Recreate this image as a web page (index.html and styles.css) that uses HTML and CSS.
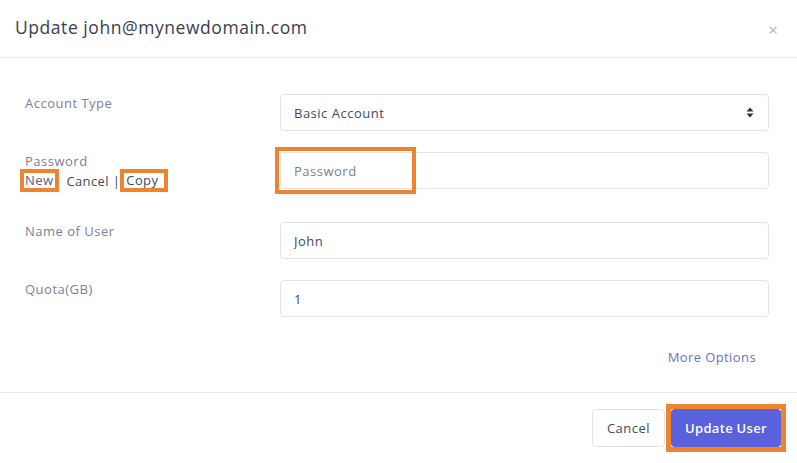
FILE: index.html
```html
<!DOCTYPE html>
<html lang="en">
<head>
<meta charset="utf-8">
<title>Update user</title>
<link rel="stylesheet" href="styles.css">
</head>
<body>
<div class="modal">
  <div class="modal-header">
    <h1 class="modal-title">Update john@mynewdomain.com</h1>
    <span class="close">×</span>
  </div>
  <div class="modal-body">
    <div class="row">
      <div class="label-col"><span class="label">Account Type</span></div>
      <div class="field-col">
        <div class="select">
          <span>Basic Account</span>
          <svg class="caret" width="8" height="11" viewBox="0 0 8 11"><path d="M4 0.5 L7.5 4.5 H0.5 Z M4 10.5 L7.5 6.5 H0.5 Z" fill="#333"/></svg>
        </div>
      </div>
    </div>
    <div class="row row-password">
      <div class="label-col">
        <span class="label">Password</span>
        <div class="pw-links">
          <span class="mark mark-new">New</span>
          <span class="cancel-link">Cancel |</span>
          <span class="mark mark-copy">Copy</span>
        </div>
      </div>
      <div class="field-col field-annotated">
        <input class="input" type="text" placeholder="Password">
        <span class="annot-box"></span>
      </div>
    </div>
    <div class="row">
      <div class="label-col"><span class="label">Name of User</span></div>
      <div class="field-col"><input class="input filled" type="text" value="John"></div>
    </div>
    <div class="row">
      <div class="label-col"><span class="label">Quota(GB)</span></div>
      <div class="field-col"><input class="input filled" type="text" value="1"></div>
    </div>
    <div class="more"><a class="more-link">More Options</a></div>
  </div>
  <div class="modal-footer">
    <button class="btn btn-cancel">Cancel</button>
    <div class="btn-annot"><button class="btn btn-primary">Update User</button></div>
  </div>
</div>
</body>
</html>
```
FILE: styles.css
```css
* { box-sizing: border-box; }
html, body { margin: 0; padding: 0; background: #fff; }
body {
  font-family: "Open Sans", "Liberation Sans", sans-serif;
  color: #444a5a;
  width: 797px;
  height: 463px;
  overflow: hidden;
}
.modal { width: 797px; height: 463px; display: flex; flex-direction: column; }
.modal-header {
  height: 58px;
  border-bottom: 1px solid #e9e9ee;
  display: flex;
  align-items: center;
  justify-content: space-between;
  padding: 0 19px 0 15px;
}
.modal-title {
  margin: 0;
  font-size: 17.5px;
  font-weight: 500;
  color: #3a3d4d;
  letter-spacing: 0.55px;
  padding-bottom: 3px;
}
.close { color: #b5b5bd; font-size: 17px; line-height: 1; padding-top: 2px; }
.modal-body {
  padding: 36px 28px 0 25px;
  flex: 1;
  border-bottom: 1px solid #e9e9ee;
}
.row { display: flex; margin-bottom: 21px; }
.row-password { margin-bottom: 30px; }
.label-col { width: 255px; display: flex; flex-direction: column; }
.label { font-size: 13px; line-height: 18px; color: #7b8099; letter-spacing: 0.5px; }
.field-col { flex: 1; }
.select, .input {
  width: 100%;
  height: 37px;
  border: 1px solid #e2e3e8;
  border-radius: 4px;
  background: #fff;
  font-family: inherit;
  font-size: 13px;
  color: #444a5a;
  padding: 0 13px;
  letter-spacing: 0.5px;
}
.select { display: flex; align-items: center; justify-content: space-between; padding-right: 14px; }
.input { display: block; outline: none; }
.input::placeholder { color: #7b8099; }
.field-annotated { position: relative; }
.annot-box {
  position: absolute;
  left: -5px;
  top: -5px;
  width: 141px;
  height: 47px;
  border: 4px solid #f08330;
  pointer-events: none;
}
.pw-links { display: flex; align-items: center; margin-top: -1px; margin-left: -5px; font-size: 13px; color: #444a5a; letter-spacing: 0.4px; }
.mark { border: 4px solid #f08330; line-height: 15px; height: 23px; }
.mark-new { padding: 0 2px 0 1px; color: #5a607a; }
.cancel-link { margin-left: 7px; margin-right: 0; }
.mark-copy { padding: 0 6px 0 2px; }
.more { text-align: right; padding: 7px 13px 0 0; }
.more-link { font-size: 13px; line-height: 18px; color: #6a71c6; letter-spacing: 0.4px; }
.modal-footer {
  height: 70px;
  display: flex;
  align-items: center;
  justify-content: flex-end;
  padding: 0 11px 0 0;
  gap: 1px;
}
.btn {
  font-family: inherit;
  font-size: 13px;
  height: 38px;
  border-radius: 4px;
  cursor: pointer;
  letter-spacing: 0.5px;
}
.btn-cancel { background: #fff; border: 1px solid #e2e3e8; color: #444a5a; width: 73px; padding: 0; }
.btn-annot { border: 5px solid #f08330; padding: 0; display: flex; }
.btn-primary {
  background: #5961dc;
  border: none;
  color: #fff;
  font-weight: 600;
  width: 110px;
  padding: 0;
  font-size: 13px;
  letter-spacing: 0.3px;
}
```
